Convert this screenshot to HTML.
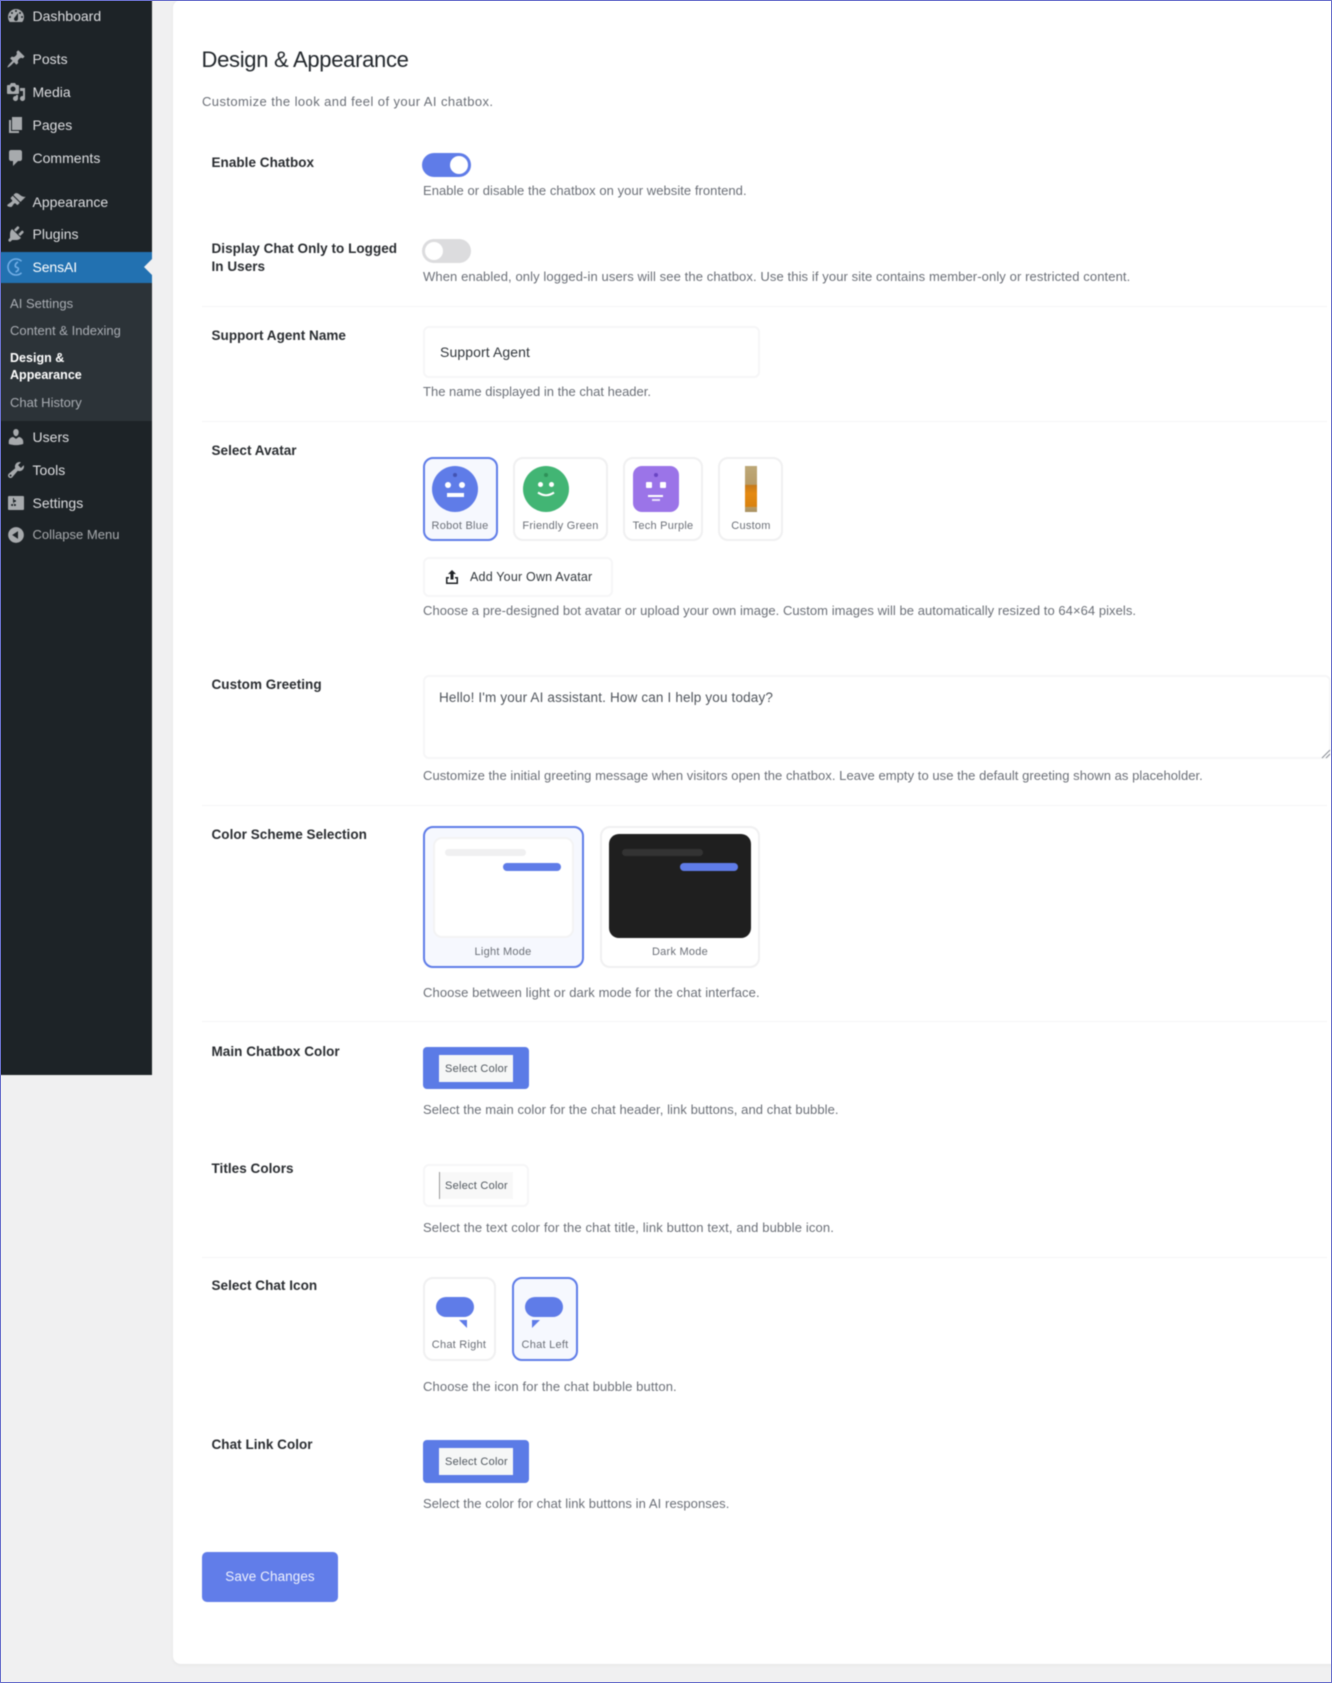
<!DOCTYPE html>
<html><head><meta charset="utf-8"><title>Design &amp; Appearance</title>
<style>
html,body{margin:0;padding:0;background:#f0f0f1}
#p{position:relative;width:1332px;height:1683px;overflow:hidden;background:#f0f0f1;font-family:"Liberation Sans",sans-serif}
#b{left:0;top:0;width:1332px;height:1683px;filter:blur(.45px)}
#p div,#p svg{position:absolute}
.t{white-space:nowrap;line-height:20px;height:20px;margin-top:-10px}
.m{color:#dcdde0;font-size:14px;left:32.5px;letter-spacing:.02px}
.s{color:#a9adb3;font-size:13px;left:10px;letter-spacing:.02px}
.l{left:211.5px;font-size:13.5px;font-weight:bold;color:#2a2d31;letter-spacing:.04px;margin-top:-9px}
.d{left:423px;font-size:13px;color:#6c7078;letter-spacing:.08px}
.c{font-size:11px;color:#6c7078;letter-spacing:.25px;text-align:center;transform:translateX(-50%)}
.card{box-sizing:border-box;border:2px solid #f0f0f1;border-radius:10px;background:#fff}
.sel{border-color:#5f7ce8;background:#f6f8fe}
.hr{left:202px;width:1125px;height:1px;background:#f5f5f6}
.ic{fill:#a7aaad;width:20px;height:20px;left:6px}
.box{box-sizing:border-box;border:2px solid #f6f6f7;border-radius:6px;background:#fff}
</style></head><body>
<div id="p">
<div id="b">
<div style="left:173px;top:0;width:1200px;height:1664px;background:#fff;border-radius:8px;box-shadow:0 1px 4px rgba(0,0,0,.05)"></div>

<!-- sidebar -->
<div style="left:0;top:0;width:152px;height:1075px;background:#1d2327"></div>
<div style="left:0;top:252px;width:152px;height:31px;background:#2271b1"></div>
<div style="left:0;top:283px;width:152px;height:138px;background:#2c3338"></div>
<svg style="left:144px;top:259px" width="8" height="16"><path d="M8 0L0 8l8 8z" fill="#f0f0f1"/></svg>

<svg class="ic" viewBox="0 0 20 20" style="top:6px"><path fill-rule="evenodd" d="M3.76 16h12.48c1.1-1.37 1.76-3.11 1.76-5 0-4.42-3.58-8-8-8s-8 3.58-8 8c0 1.89.66 3.63 1.76 5zM10 4c.55 0 1 .45 1 1s-.45 1-1 1-1-.45-1-1 .45-1 1-1zM6 6c.55 0 1 .45 1 1s-.45 1-1 1-1-.45-1-1 .45-1 1-1zm8 0c.55 0 1 .45 1 1s-.45 1-1 1-1-.45-1-1 .45-1 1-1zm-5.37 5.55L12 7v6c0 1.1-.9 2-2 2s-2-.9-2-2c0-.57.24-1.08.63-1.45zM4 10c.55 0 1 .45 1 1s-.45 1-1 1-1-.45-1-1 .45-1 1-1zm12 0c.55 0 1 .45 1 1s-.45 1-1 1-1-.45-1-1 .45-1 1-1z"/></svg>
<svg class="ic" viewBox="0 0 20 20" style="top:49px"><path d="M10.44 3.02l1.82-1.82 6.36 6.35-1.83 1.82c-1.05-.68-2.48-.57-3.41.36l-.75.75c-.92.93-1.04 2.35-.35 3.41l-1.83 1.82-2.41-2.41-2.8 2.79c-.42.42-3.38 2.71-3.8 2.29s1.86-3.39 2.28-3.81l2.79-2.79L4.1 9.36l1.83-1.82c1.05.69 2.48.57 3.4-.36l.75-.75c.93-.92 1.05-2.35.36-3.41z"/></svg>
<svg class="ic" viewBox="0 0 20 20" style="top:82px"><path fill-rule="evenodd" d="M13 11V4c0-.55-.45-1-1-1h-1.67L9 1H5L3.67 3H2c-.55 0-1 .45-1 1v7c0 .55.45 1 1 1h10c.55 0 1-.45 1-1zM7 4.5c1.38 0 2.5 1.12 2.5 2.5S8.38 9.5 7 9.5 4.5 8.38 4.5 7 5.62 4.5 7 4.5zM14 6h5v10.5c0 1.38-1.12 2.5-2.5 2.5S14 17.88 14 16.5s1.12-2.5 2.5-2.5c.17 0 .34.02.5.05V9h-3V6zm-4 8.05V13h2v3.5c0 1.38-1.12 2.5-2.5 2.5S7 17.88 7 16.5 8.12 14 9.5 14c.17 0 .34.02.5.05z"/></svg>
<svg class="ic" viewBox="0 0 20 20" style="top:115px"><path d="M6 15V2h10v13H6zm-1 1h8v2H3V5h2v11z"/></svg>
<svg class="ic" viewBox="0 0 20 20" style="top:148px"><path d="M5 2h9c1.1 0 2 .9 2 2v7c0 1.1-.9 2-2 2h-2l-5 5v-5H5c-1.1 0-2-.9-2-2V4c0-1.1.9-2 2-2z"/></svg>
<svg class="ic" viewBox="0 0 20 20" style="top:191px"><path d="M14.48 11.06L7.41 3.99l1.5-1.5c.5-.56 2.3-.47 3.51.32 1.21.8 1.43 1.28 2.91 2.1 1.18.64 2.45 1.26 4.45.85zm-.71.71L6.7 4.7 4.93 6.47c-.39.39-.39 1.02 0 1.41l1.06 1.06c.39.39.39 1.03 0 1.42-.6.6-1.43 1.11-2.21 1.69-.35.26-.7.53-1.01.84C1.43 13.23.95 14.4 1.48 15s3.5 1.5 4.2.75c.3-.31.58-.66.84-1.02.57-.78 1.08-1.61 1.69-2.21.39-.39 1.02-.39 1.41 0l1.06 1.06c.39.39 1.02.39 1.41 0z"/></svg>
<svg class="ic" viewBox="0 0 20 20" style="top:224px"><path d="M13.11 4.36L9.87 7.6 8 5.73l3.24-3.24c.35-.34 1.05-.2 1.56.32.52.51.66 1.21.31 1.55zm-8 1.77l.91-1.12 9.01 9.01-1.19.84c-.71.71-2.63 1.16-3.82 1.16H6.14L4.9 17.26c-.59.59-1.54.59-2.12 0-.59-.58-.59-1.53 0-2.12l1.24-1.24v-3.88c0-1.13.4-3.19 1.09-3.89zm7.26 3.97l3.24-3.24c.34-.35 1.04-.21 1.55.31.52.51.66 1.21.31 1.55l-3.24 3.25z"/></svg>
<svg viewBox="0 0 20 20" style="left:6px;top:257px;width:20px;height:20px"><path d="M15.5 4.2A8 8 0 1 0 15.5 15.8" fill="none" stroke="#72aee6" stroke-width="1.6"/><path d="M12 5C8.5 7 8.5 10 11 10.5S12.5 14 9.5 15" fill="none" stroke="#72aee6" stroke-width="1.6"/></svg>
<svg class="ic" viewBox="0 0 20 20" style="top:427px"><path d="M10 9.25c-2.27 0-2.73-3.44-2.73-3.44C7 4.02 7.82 2 9.97 2c2.16 0 2.98 2.02 2.71 3.81 0 0-.41 3.44-2.68 3.44zm0 2.57L12.72 10c2.39 0 4.52 2.33 4.52 4.53v2.49s-3.65 1.13-7.24 1.13c-3.65 0-7.24-1.13-7.24-1.13v-2.49c0-2.25 1.94-4.48 4.47-4.48z"/></svg>
<svg class="ic" viewBox="0 0 20 20" style="top:460px"><path fill-rule="evenodd" d="M16.68 9.77c-1.34 1.34-3.3 1.67-4.95.99l-5.41 6.52c-.99.99-2.59.99-3.58 0s-.99-2.59 0-3.57l6.52-5.42c-.68-1.65-.35-3.61.99-4.95 1.28-1.28 3.12-1.62 4.72-1.06l-2.89 2.89 2.82 2.82 2.86-2.87c.53 1.58.18 3.39-1.08 4.65zM3.81 16.21c.4.39 1.04.39 1.43 0 .4-.4.4-1.04 0-1.43-.39-.4-1.03-.4-1.43 0-.39.39-.39 1.03 0 1.43z"/></svg>
<svg class="ic" viewBox="0 0 20 20" style="top:493px"><path fill-rule="evenodd" d="M18 16V4c0-.55-.45-1-1-1H3c-.55 0-1 .45-1 1v12c0 .55.45 1 1 1h14c.55 0 1-.45 1-1zM8 11h1c.55 0 1 .45 1 1s-.45 1-1 1H8v1.5c0 .28-.22.5-.5.5s-.5-.22-.5-.5V13H6c-.55 0-1-.45-1-1s.45-1 1-1h1V5.5c0-.28.22-.5.5-.5s.5.22.5.5V7h1c.55 0 1 .45 1 1s-.45 1-1 1h-1v5.5c0 .28-.22.5-.5.5s-.5-.22-.5-.5V9z"/></svg>
<svg class="ic" viewBox="0 0 20 20" style="top:525px"><path fill-rule="evenodd" d="M10 2.16c4.33 0 7.84 3.51 7.84 7.84s-3.51 7.84-7.84 7.84S2.16 14.33 2.16 10 5.71 2.16 10 2.16zm2 11.72V6.12L6.18 9.97z"/></svg>

<div class="t m" style="top:16px">Dashboard</div>
<div class="t m" style="top:59px">Posts</div>
<div class="t m" style="top:92px">Media</div>
<div class="t m" style="top:125px">Pages</div>
<div class="t m" style="top:158px">Comments</div>
<div class="t m" style="top:202px">Appearance</div>
<div class="t m" style="top:234px">Plugins</div>
<div class="t m" style="top:267px;color:#fff;letter-spacing:-.1px">SensAI</div>
<div class="t s" style="top:304px">AI Settings</div>
<div class="t s" style="top:331px">Content &amp; Indexing</div>
<div class="t s" style="top:358px;color:#fff;font-weight:bold;font-size:12.5px">Design &amp;</div>
<div class="t s" style="top:375px;color:#fff;font-weight:bold;font-size:12.5px">Appearance</div>
<div class="t s" style="top:403px">Chat History</div>
<div class="t m" style="top:437px">Users</div>
<div class="t m" style="top:470px">Tools</div>
<div class="t m" style="top:503px">Settings</div>
<div class="t m" style="top:535px;color:#a7aaad;font-size:13px">Collapse Menu</div>

<!-- header -->
<div class="t" style="left:201.5px;top:60px;font-size:22px;color:#23282d;letter-spacing:-.3px">Design &amp; Appearance</div>
<div class="t" style="left:202px;top:101.5px;font-size:13px;color:#6c7078;letter-spacing:.42px">Customize the look and feel of your AI chatbox.</div>

<!-- labels -->
<div class="t l" style="top:162px">Enable Chatbox</div>
<div class="t l" style="top:248px">Display Chat Only to Logged</div>
<div class="t l" style="top:266px">In Users</div>
<div class="t l" style="top:335px">Support Agent Name</div>
<div class="t l" style="top:450px">Select Avatar</div>
<div class="t l" style="top:684px">Custom Greeting</div>
<div class="t l" style="top:834px">Color Scheme Selection</div>
<div class="t l" style="top:1051px">Main Chatbox Color</div>
<div class="t l" style="top:1168px">Titles Colors</div>
<div class="t l" style="top:1285px">Select Chat Icon</div>
<div class="t l" style="top:1444px">Chat Link Color</div>

<!-- dividers -->
<div class="hr" style="top:306px"></div>
<div class="hr" style="top:421px"></div>
<div class="hr" style="top:805px"></div>
<div class="hr" style="top:1021px"></div>
<div class="hr" style="top:1257px"></div>

<!-- toggles -->
<div style="left:422px;top:153px;width:49px;height:24px;border-radius:12px;background:#5f7ce8"></div>
<div style="left:450px;top:156px;width:18px;height:18px;border-radius:50%;background:#fff"></div>
<div class="t d" style="top:191px;letter-spacing:.05px">Enable or disable the chatbox on your website frontend.</div>
<div style="left:422px;top:239px;width:49px;height:24px;border-radius:12px;background:#dcdcde"></div>
<div style="left:425px;top:242px;width:18px;height:18px;border-radius:50%;background:#fff"></div>
<div class="t d" style="top:277px;letter-spacing:.1px">When enabled, only logged-in users will see the chatbox. Use this if your site contains member-only or restricted content.</div>

<!-- input -->
<div class="box" style="left:423px;top:326px;width:337px;height:52px"></div>
<div class="t" style="left:440px;top:352px;font-size:14px;color:#32373c;letter-spacing:.1px">Support Agent</div>
<div class="t d" style="top:392px;letter-spacing:.01px">The name displayed in the chat header.</div>

<!-- avatars -->
<div class="card sel" style="left:423px;top:457px;width:75px;height:84px"></div>
<div style="left:432px;top:466px;width:46px;height:46px;border-radius:50%;background:#5f7ce8"></div>
<div style="left:453px;top:473px;width:4px;height:4px;border-radius:50%;background:#4353b3"></div>
<div style="left:445px;top:482px;width:6px;height:6px;border-radius:50%;background:#fff"></div>
<div style="left:459px;top:482px;width:6px;height:6px;border-radius:50%;background:#fff"></div>
<div style="left:447px;top:493px;width:17px;height:4px;background:#fff"></div>
<div class="t c" style="left:460px;top:525.5px">Robot Blue</div>

<div class="card" style="left:513px;top:457px;width:95px;height:84px"></div>
<div style="left:523px;top:466px;width:46px;height:46px;border-radius:50%;background:#42b574"></div>
<div style="left:544px;top:473px;width:4px;height:4px;border-radius:50%;background:#2f9059"></div>
<div style="left:538px;top:482px;width:5px;height:5px;border-radius:50%;background:#fff"></div>
<div style="left:549px;top:482px;width:5px;height:5px;border-radius:50%;background:#fff"></div>
<svg style="left:536px;top:491px" width="20" height="8"><path d="M2 1.5Q10 7 18 1.5" fill="none" stroke="#fff" stroke-width="2"/></svg>
<div class="t c" style="left:560.5px;top:525.5px">Friendly Green</div>

<div class="card" style="left:623px;top:457px;width:80px;height:84px"></div>
<div style="left:633px;top:466px;width:46px;height:46px;border-radius:9px;background:#9b74e8"></div>
<div style="left:654px;top:473px;width:4px;height:4px;border-radius:50%;background:#6a45c4"></div>
<div style="left:646px;top:482px;width:6px;height:6px;border-radius:1px;background:#fff"></div>
<div style="left:660px;top:482px;width:6px;height:6px;border-radius:1px;background:#fff"></div>
<div style="left:648px;top:495px;width:15px;height:2px;background:#fff"></div>
<div style="left:652px;top:499px;width:8px;height:2px;background:#e9e0fb"></div>
<div class="t c" style="left:663px;top:525.5px">Tech Purple</div>

<div class="card" style="left:718px;top:457px;width:65px;height:84px"></div>
<div style="left:745px;top:466px;width:12px;height:46px;background:linear-gradient(#bda878 0,#b89c68 40%,#c77a1a 42%,#e58a12 60%,#d9820f 88%,#b89c68 90%,#a8905f 100%)"></div>
<div class="t c" style="left:751px;top:525.5px">Custom</div>

<div class="box" style="left:423px;top:557px;width:190px;height:40px"></div>
<svg viewBox="0 0 12 14" style="left:446px;top:570px;width:12px;height:14px"><path d="M6 0L10 4H7.5V9.5h-3V4H2zM0 7h3v1.5H1.5v4h9v-4H9V7h3v7H0z" fill="#1f2226"/></svg>
<div class="t" style="left:470px;top:577px;font-size:12.5px;color:#32373c;letter-spacing:.2px">Add Your Own Avatar</div>
<div class="t d" style="top:611px;letter-spacing:.05px">Choose a pre-designed bot avatar or upload your own image. Custom images will be automatically resized to 64×64 pixels.</div>

<!-- textarea -->
<div class="box" style="left:423px;top:675px;width:908px;height:84px"></div>
<div class="t" style="left:439px;top:697.5px;font-size:13.5px;color:#50555c;letter-spacing:.16px">Hello! I'm your AI assistant. How can I help you today?</div>
<svg style="left:1321px;top:749px" width="10" height="10"><path d="M1 9L9 1M5 9L9 5" stroke="#8a8f96" stroke-width="1"/></svg>
<div class="t d" style="top:775.5px;letter-spacing:.05px">Customize the initial greeting message when visitors open the chatbox. Leave empty to use the default greeting shown as placeholder.</div>

<!-- color scheme -->
<div class="card sel" style="left:423px;top:826px;width:161px;height:142px"></div>
<div style="box-sizing:border-box;left:433px;top:837px;width:141px;height:101px;border:2px solid #f3f3f4;border-radius:9px;background:#fff"></div>
<div style="left:445px;top:849px;width:81px;height:7px;border-radius:4px;background:#f0f0f1"></div>
<div style="left:503px;top:863px;width:58px;height:8px;border-radius:4px;background:#5f7ce8"></div>
<div class="t c" style="left:503px;top:952px">Light Mode</div>
<div class="card" style="left:600px;top:826px;width:160px;height:142px"></div>
<div style="left:609px;top:834px;width:142px;height:104px;border-radius:10px;background:#1f1f1f"></div>
<div style="left:622px;top:849px;width:81px;height:7px;border-radius:4px;background:#333"></div>
<div style="left:680px;top:863px;width:58px;height:8px;border-radius:4px;background:#5f7ce8"></div>
<div class="t c" style="left:680px;top:952px">Dark Mode</div>
<div class="t d" style="top:993px;letter-spacing:.1px">Choose between light or dark mode for the chat interface.</div>

<!-- main color -->
<div style="left:423px;top:1047px;width:106px;height:42px;border-radius:4px;background:#5b7be6"></div>
<div style="left:439px;top:1055px;width:74px;height:27px;background:#f6f7f7"></div>
<div class="t c" style="left:476.5px;top:1069px;font-size:11px;color:#50575e">Select Color</div>
<div class="t d" style="top:1110px">Select the main color for the chat header, link buttons, and chat bubble.</div>

<!-- titles color -->
<div class="box" style="left:423px;top:1164px;width:106px;height:43px"></div>
<div style="left:439px;top:1172px;width:74px;height:27px;background:#f8f8f8"></div>
<div style="left:439px;top:1172px;width:1px;height:27px;background:#9a9a9a"></div>
<div class="t c" style="left:476.5px;top:1186px;font-size:11px;color:#50575e">Select Color</div>
<div class="t d" style="top:1227.5px;letter-spacing:.14px">Select the text color for the chat title, link button text, and bubble icon.</div>

<!-- chat icons -->
<div class="card" style="left:423px;top:1277px;width:73px;height:84px"></div>
<div style="left:436px;top:1297px;width:38px;height:20px;border-radius:10px;background:#5f7ce8"></div>
<svg style="left:459px;top:1320px" width="8" height="8"><path d="M0 0H8V8z" fill="#5f7ce8"/></svg>
<div class="t c" style="left:459px;top:1345px">Chat Right</div>
<div class="card sel" style="left:512px;top:1277px;width:66px;height:84px"></div>
<div style="left:525px;top:1297px;width:38px;height:20px;border-radius:10px;background:#5f7ce8"></div>
<svg style="left:532px;top:1320px" width="8" height="8"><path d="M0 0H8L0 8z" fill="#5f7ce8"/></svg>
<div class="t c" style="left:545px;top:1345px">Chat Left</div>
<div class="t d" style="top:1387px;letter-spacing:.12px">Choose the icon for the chat bubble button.</div>

<!-- link color -->
<div style="left:423px;top:1440px;width:106px;height:43px;border-radius:4px;background:#5b7be6"></div>
<div style="left:439px;top:1448px;width:74px;height:27px;background:#f6f7f7"></div>
<div class="t c" style="left:476.5px;top:1462px;font-size:11px;color:#50575e">Select Color</div>
<div class="t d" style="top:1503.5px">Select the color for chat link buttons in AI responses.</div>

<!-- save -->
<div style="left:202px;top:1552px;width:136px;height:50px;border-radius:5px;background:#617de9"></div>
<div class="t" style="left:270px;top:1577px;transform:translateX(-50%);font-size:13.5px;color:#eef1fd;letter-spacing:.08px">Save Changes</div>
</div>

<!-- frame -->
<div style="box-sizing:border-box;left:0;top:0;width:1332px;height:1683px;border:1px solid #6a70cc;pointer-events:none"></div>
</div>
</body></html>
